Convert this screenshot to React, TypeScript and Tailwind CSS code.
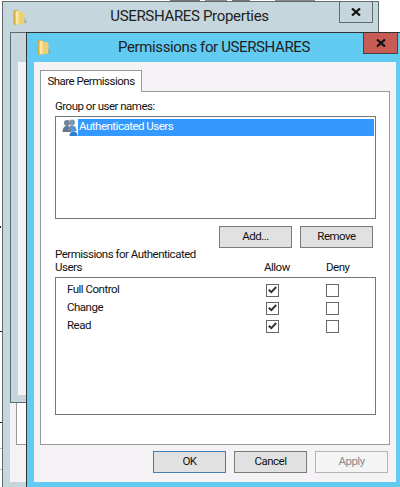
import React from 'react'

const font = { fontFamily: 'Roboto' }

function Folder({ className }: { className: string }) {
  return (
    <svg className={className} viewBox="0 0 14 17">
      <path d="M0.5 1.5 L5 0.5 L6 3 L6 14 L2 16.5 L0.5 14 Z" fill="#d2ab3f" />
      <path d="M5 3 L10.5 3 L11.5 5 L11.5 14.5 L6 15.5 L4 15.5 Z" fill="#efcf74" />
      <path d="M2.5 2 L5.5 1.5 L5.5 14.5 L2.5 15.5 Z" fill="#f8e9a8" />
      <path d="M11.5 8 L14 13.5 L11.5 14.5 Z" fill="#8a9ca2" opacity="0.7" />
    </svg>
  )
}

function UsersIcon() {
  return (
    <svg className="h-[18px] w-[16px] shrink-0" viewBox="0 0 16 18">
      <circle cx="5" cy="5" r="3" fill="#6f8597" />
      <path d="M0.5 14 C0.5 9 3 8 5 8 C7 8 9.5 9 9.5 14 Z" fill="#5f7a92" />
      <circle cx="10" cy="4.5" r="3" fill="#8397a8" />
      <path d="M6 13 C6 9 8 7.5 10 7.5 C12 7.5 14.5 9 14.5 13 Z" fill="#7489a0" />
      <circle cx="11.5" cy="11" r="2.6" fill="#4f9ae0" />
      <path d="M7.5 18 C7.5 14.5 9.5 13.5 11.5 13.5 C13.5 13.5 15.5 14.5 15.5 18 Z" fill="#2f7fd0" />
    </svg>
  )
}

function CloseX({ className }: { className?: string }) {
  return (
    <svg className={className} width="10" height="8" viewBox="0 0 10 8">
      <path d="M1 0.5 L9 7.5 M9 0.5 L1 7.5" stroke="#111" strokeWidth="2.2" />
    </svg>
  )
}

function Check({ on }: { on: boolean }) {
  return (
    <div className="flex h-[13px] w-[13px] items-center justify-center border border-[#666] bg-white">
      {on && (
        <svg width="9" height="8" viewBox="0 0 9 8">
          <path d="M0.8 3.8 L3.3 6.2 L8.2 1" fill="none" stroke="#333" strokeWidth="2" />
        </svg>
      )}
    </div>
  )
}

function Btn({ label, className }: { label: string; className: string }) {
  return (
    <div className={`flex h-[22px] w-[73px] items-center justify-center border ${className}`}>
      {label}
    </div>
  )
}

const perms = ['Full Control', 'Change', 'Read']

export default function App() {
  return (
    <div className="relative h-[487px] w-[400px] overflow-hidden bg-white text-[11.5px] tracking-[-0.5px] text-[#111]" style={font}>
      {/* stray text from the page behind */}
      <div className="absolute left-[170px] top-0 flex h-px w-[168px] gap-[5px]">
        <div className="w-[30px] bg-[#777]" />
        <div className="w-[22px] bg-[#888]" />
        <div className="w-[18px] bg-[#777]" />
        <div className="ml-[20px] w-[40px] bg-[#888]" />
      </div>
      <div className="absolute left-0 top-[226px] h-[2px] w-[1px] bg-[#222]" />
      <div className="absolute left-0 top-[331px] h-px w-[2px] bg-[#222]" />
      <div className="absolute left-0 top-[422px] h-px w-[2px] bg-[#222]" />
      <div className="absolute left-0 top-[448px] h-px w-[2px] bg-[#bbb]" />
      <div className="absolute left-0 top-[469px] h-px w-[2px] bg-[#bbb]" />

      {/* USERSHARES Properties window */}
      <div className="absolute left-[2px] top-[1px] h-[500px] w-[377px] border border-[#5f6b70] bg-[#c5d6dd]">
        <div className="flex h-[30px] items-center justify-center pr-[2px] text-[15px] tracking-[-0.33px] text-[#222]">
          <span className="relative top-[-1px]">USERSHARES Properties</span>
        </div>
        <Folder className="absolute left-[10px] top-[7px] h-[17px] w-[14px]" />
        <div className="absolute right-[5px] top-[-1px] flex h-[22px] w-[34px] items-center justify-center border border-[#5f6b70]">
          <CloseX />
        </div>
        <div className="ml-[7px] h-[371px] border-b border-l border-t border-[#5f6b70] pl-[7px] pt-[29px]">
          <div className="h-[333px] bg-[#f5f2f6]" />
        </div>
        <div className="ml-[7px] h-[79px] bg-[#f5f2f6] pl-[6px]">
          <div className="h-[42px] w-[20px] border-b border-l border-[#9a9a9a] bg-white" />
        </div>
      </div>

      {/* Permissions dialog */}
      <div className="absolute left-[26px] top-[32px] h-[470px] w-[380px] border-l border-t border-[#333] bg-[#62cbf2] pl-[7px] pt-[29px]">
        <div className="absolute left-[91px] top-0 flex h-[29px] w-[192px] items-center justify-center whitespace-nowrap text-[15px] tracking-[-0.38px] text-[#222]">
          Permissions for USERSHARES
        </div>
        <Folder className="absolute left-[10px] top-[6px] h-[17px] w-[14px]" />
        <div className="absolute left-[336px] top-0 flex h-[21px] w-[35px] items-center justify-center border border-[#444] border-t-0 bg-[#c75c54]">
          <CloseX />
        </div>

        <div className="absolute left-[7px] top-[29px] h-[420px] w-[362px] bg-[#f5f2f6] px-[6px] pt-[8px]">
          {/* tab */}
          <div className="relative z-10 flex h-[22px] w-[102px] items-center justify-center border border-b-0 border-[#9a9a9a] bg-white">
            Share Permissions
          </div>
          {/* tab panel */}
          <div className="mt-[-1px] h-[354px] w-[350px] border border-[#9a9a9a] bg-white px-[14px] pt-[6px]">
            <div className="h-[17px] leading-[17px]">Group or user names:</div>
            <div className="mt-[1px] h-[103px] w-[321px] border border-[#777] bg-white p-px">
              <div className="flex h-[18px] items-center pl-[5px]">
                <UsersIcon />
                <div className="flex h-[17px] flex-1 items-center bg-[#3399ff] pl-[1px] text-white">Authenticated Users</div>
              </div>
            </div>
            <div className="mt-[7px] flex w-[318px] justify-end gap-[8px]">
              <Btn label="Add..." className="border-[#7a7a7a] bg-[#e1e1e1]" />
              <Btn label="Remove" className="border-[#7a7a7a] bg-[#e1e1e1]" />
            </div>
            <div className="mt-[1px] flex h-[27px] items-end pb-[2px]">
              <div className="w-[209px] leading-[13px]">
                Permissions for Authenticated
                <br />
                Users
              </div>
              <div className="w-[62px] leading-[13px]">Allow</div>
              <div className="leading-[13px]">Deny</div>
            </div>
            <div className="mt-[1px] h-[138px] w-[321px] border border-[#777] bg-white pl-[11px] pt-[3px]">
              {perms.map((p) => (
                <div key={p} className="flex h-[18px] items-center">
                  <div className="w-[199px]">{p}</div>
                  <div className="w-[60px]">
                    <Check on />
                  </div>
                  <Check on={false} />
                </div>
              ))}
            </div>
          </div>
          {/* footer buttons */}
          <div className="mt-[6px] flex w-[348px] justify-end gap-[8px]">
            <Btn label="OK" className="border-[#3a7fb5] bg-[#e1e1e1]" />
            <Btn label="Cancel" className="border-[#7a7a7a] bg-[#e1e1e1]" />
            <Btn label="Apply" className="border-[#b5b5b5] bg-[#f4f4f4] text-[#8a8a8a]" />
          </div>
        </div>
      </div>
    </div>
  )
}
